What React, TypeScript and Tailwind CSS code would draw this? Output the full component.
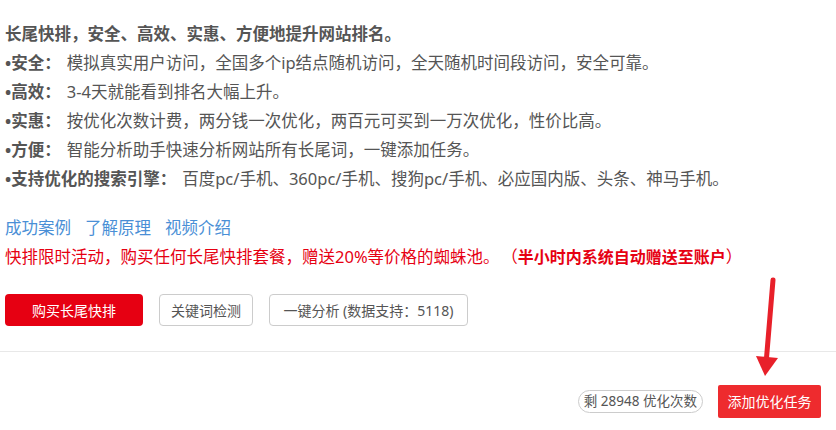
import React from "react";

const features: { label: string; text: string }[] = [
  { label: "安全：", text: "模拟真实用户访问，全国多个ip结点随机访问，全天随机时间段访问，安全可靠。" },
  { label: "高效：", text: "3-4天就能看到排名大幅上升。" },
  { label: "实惠：", text: "按优化次数计费，两分钱一次优化，两百元可买到一万次优化，性价比高。" },
  { label: "方便：", text: "智能分析助手快速分析网站所有长尾词，一键添加任务。" },
  { label: "支持优化的搜索引擎：", text: "百度pc/手机、360pc/手机、搜狗pc/手机、必应国内版、头条、神马手机。" },
];

function App() {
  return (
    <div
      className="relative w-[836px] h-[430px] bg-white overflow-hidden text-[#555]"
      style={{ fontFamily: '"Noto Sans", "Noto Sans CJK SC", sans-serif' }}
    >
      <div className="px-[5px] pt-[19px]">
        <p className="text-[16.5px] leading-[29px] font-bold">长尾快排，安全、高效、实惠、方便地提升网站排名。</p>
        {features.map((f) => (
          <p key={f.label} className="text-[16.5px] leading-[29px]">
            <span className="font-bold">•{f.label}</span>
            <span className="ml-[6px]">{f.text}</span>
          </p>
        ))}

        <div className="flex gap-[14px] mt-[20px] text-[16.5px] leading-[29px] text-[#4a8fd6]">
          <span>成功案例</span>
          <span>了解原理</span>
          <span>视频介绍</span>
        </div>
        <p className="text-[16.5px] leading-[29px] text-[#e60012]">
          快排限时活动，购买任何长尾快排套餐，赠送20%等价格的蜘蛛池。
          <span className="ml-[10px]">（</span>
          <span className="font-bold text-[16px]">半小时内系统自动赠送至账户</span>
          <span>）</span>
        </p>

        <div className="flex items-center gap-[16px] mt-[22px] text-[14px]">
          <button className="w-[138px] h-[32px] rounded-[4px] bg-[#e60012] text-white">购买长尾快排</button>
          <button className="w-[94px] h-[32px] rounded-[4px] border border-[#ccc] bg-white text-[#555]">关键词检测</button>
          <button className="w-[199px] h-[32px] rounded-[4px] border border-[#ccc] bg-white text-[#555]">
            一键分析 (数据支持：5118)
          </button>
        </div>
      </div>

      <div className="mt-[25px] border-t border-[#e8e8e8]" />

      <div className="flex items-center justify-end gap-[15px] pr-[15px] pt-[33px]">
        <span className="h-[23px] px-[5px] flex items-center rounded-full border border-[#ccc] text-[13.5px] text-[#555]">
          剩 28948 优化次数
        </span>
        <button className="w-[103px] h-[33px] rounded-[2px] bg-[#ee2b2e] text-white text-[14px]">添加优化任务</button>
      </div>

      {/* red arrow pointing at the add button */}
      <svg className="absolute left-[750px] top-[272px]" width="40" height="110" viewBox="0 0 40 110">
        <line x1="23" y1="8" x2="16.5" y2="86" stroke="#e8202a" strokeWidth="5" strokeLinecap="round" />
        <polygon points="6,84 28,86 15,104" fill="#e8202a" />
      </svg>
    </div>
  );
}

export default App;
